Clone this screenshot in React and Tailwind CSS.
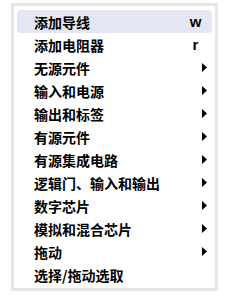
const items = [
  { label: "添加导线", key: "w", active: true },
  { label: "添加电阻器", key: "r" },
  { label: "无源元件", sub: true },
  { label: "输入和电源", sub: true },
  { label: "输出和标签", sub: true },
  { label: "有源元件", sub: true },
  { label: "有源集成电路", sub: true },
  { label: "逻辑门、输入和输出", sub: true },
  { label: "数字芯片", sub: true },
  { label: "模拟和混合芯片", sub: true },
  { label: "拖动", sub: true },
  { label: "选择/拖动选取" },
]

function Arrow() {
  return (
    <svg width="5" height="9" viewBox="0 0 5 9" className="block">
      <path d="M0 0 L5 4.5 L0 9 Z" fill="#000" />
    </svg>
  )
}

export default function App() {
  return (
    <div className="w-[227px] h-[296px] bg-white pt-[3px] pl-[11px]">
      <div
        className="w-[207px] h-[288px] border-[3px] border-[#e6e6e6] bg-white pt-[4px] px-[3px]"
        style={{ fontFamily: '"Noto Sans CJK SC", "Noto Sans", sans-serif' }}
      >
        {items.map((it) => (
          <div
            key={it.label}
            className={
              "flex items-center h-[23px] pl-[17px] rounded-[4px] text-[14px] font-bold text-black leading-none " +
              (it.active ? "bg-[#e4e7f3]" : "")
            }
          >
            <span className="flex-1">{it.label}</span>
            {it.key && (
              <span
                className="w-[19px] mr-[7px] text-center text-[15px] font-bold"
                style={{ fontFamily: '"Liberation Sans", sans-serif' }}
              >
                {it.key}
              </span>
            )}
            {it.sub && (
              <span className="pr-[5px]">
                <Arrow />
              </span>
            )}
          </div>
        ))}
      </div>
    </div>
  )
}
